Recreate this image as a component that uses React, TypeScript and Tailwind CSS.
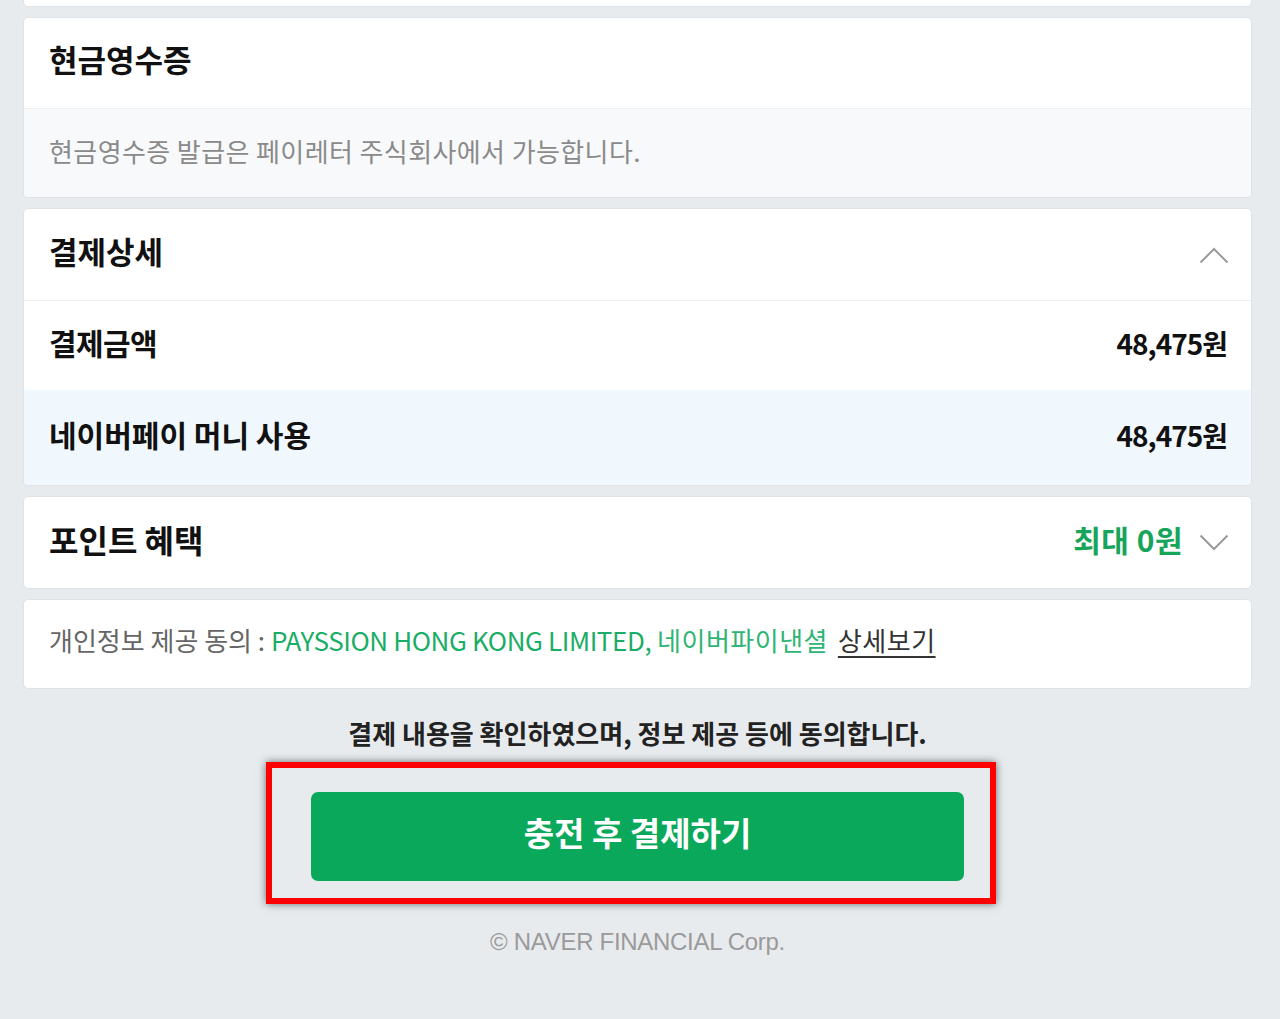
import React from 'react';

const ChevronUp = () => (
  <svg width="30" height="18" viewBox="0 0 30 18" fill="none" className="block -mr-[2px]">
    <polyline points="1.5,16.5 15,3 28.5,16.5" stroke="#9a9a9a" strokeWidth="2" />
  </svg>
);

const ChevronDown = () => (
  <svg width="30" height="18" viewBox="0 0 30 18" fill="none" className="block -mr-[2px]">
    <polyline points="1.5,1.5 15,15 28.5,1.5" stroke="#9a9a9a" strokeWidth="2" />
  </svg>
);

const Card: React.FC<{ children: React.ReactNode; className?: string }> = ({ children, className }) => (
  <div className={`bg-white border border-[#dfe2e6] rounded-[5px] overflow-hidden ${className ?? ''}`}>
    {children}
  </div>
);

export default function App() {
  return (
    <div className="min-h-[1019px] bg-[#e8ebee] pl-[23px] pr-[28px] font-['Noto_Sans_CJK_KR',sans-serif] text-[#111]">
      {/* tail of previous card */}
      <div className="h-[7px] bg-white border-x border-b border-[#dfe2e6] rounded-b-[5px]" />

      <div className="mt-[10px] flex flex-col gap-[10px]">
        <Card>
          <div className="h-[91px] flex items-center px-[25px] pb-[8px] border-b border-[#eeeff1]">
            <h2 className="text-[31px] font-bold">현금영수증</h2>
          </div>
          <div className="h-[88px] flex items-center px-[25px] pb-[6px] bg-[#f8f9fa]">
            <p className="text-[26px] text-[#8a8a8a] tracking-[0.4px]">현금영수증 발급은 페이레터 주식회사에서 가능합니다.</p>
          </div>
        </Card>

        <Card>
          <div className="h-[92px] flex items-center justify-between pl-[25px] pr-[24px] border-b border-[#eeeff1]">
            <h2 className="text-[31px] font-bold pb-[6px]">결제상세</h2>
            <ChevronUp />
          </div>
          <div className="h-[89px] flex items-center justify-between pl-[25px] pr-[24px] pb-[6px]">
            <span className="text-[30px] font-bold tracking-[-0.6px]">결제금액</span>
            <span className="text-[28px] font-bold tracking-[-1px]">48,475원</span>
          </div>
          <div className="h-[95px] flex items-center justify-between pl-[25px] pr-[24px] pb-[6px] bg-[#f0f8fe]">
            <span className="text-[30px] font-bold">네이버페이 머니 사용</span>
            <span className="text-[28px] font-bold tracking-[-1px]">48,475원</span>
          </div>
        </Card>

        <Card>
          <div className="h-[91px] flex items-center justify-between pl-[25px] pr-[24px]">
            <h2 className="text-[32px] font-bold pb-[8px]">포인트 혜택</h2>
            <div className="flex items-center gap-[16px]">
              <span className="text-[30px] font-bold text-[#17a55b] tracking-[0.5px] pb-[6px]">최대 0원</span>
              <ChevronDown />
            </div>
          </div>
        </Card>

        <Card>
          <div className="h-[88px] flex items-center px-[25px] pb-[10px]">
            <p className="text-[26px] text-[#666]">
              개인정보 제공 동의 :{' '}
              <span className="text-[#1aad66] tracking-[-0.4px]">PAYSSION HONG KONG LIMITED,</span>{' '}
              <span className="text-[#2eb574] tracking-[0.5px]">네이버파이낸셜</span>{' '}
              <span className="ml-[4px] text-[#333] tracking-[0.5px] underline underline-offset-[5px]">상세보기</span>
            </p>
          </div>
        </Card>
      </div>

      <p className="mt-[24px] text-center text-[26px] font-bold text-[#222]">
        결제 내용을 확인하였으며, 정보 제공 등에 동의합니다.
      </p>

      <div className="mt-[10px] flex justify-center">
        <div className="mr-[13px] w-[730px] border-[6px] border-[#ff0000] pt-[24px] pb-[17px] pl-[39px] pr-[26px] shadow-[0_0_8px_rgba(0,0,0,0.55)]">
          <button className="w-full h-[89px] rounded-[7px] bg-[#0aa85a] text-white text-[33px] font-bold pb-[8px]">
            충전 후 결제하기
          </button>
        </div>
      </div>

      <p className="mt-[20px] text-center text-[24px] text-[#9a9a9a] tracking-[-0.3px] font-['Liberation_Sans',sans-serif]">
        © NAVER FINANCIAL Corp.
      </p>
    </div>
  );
}
